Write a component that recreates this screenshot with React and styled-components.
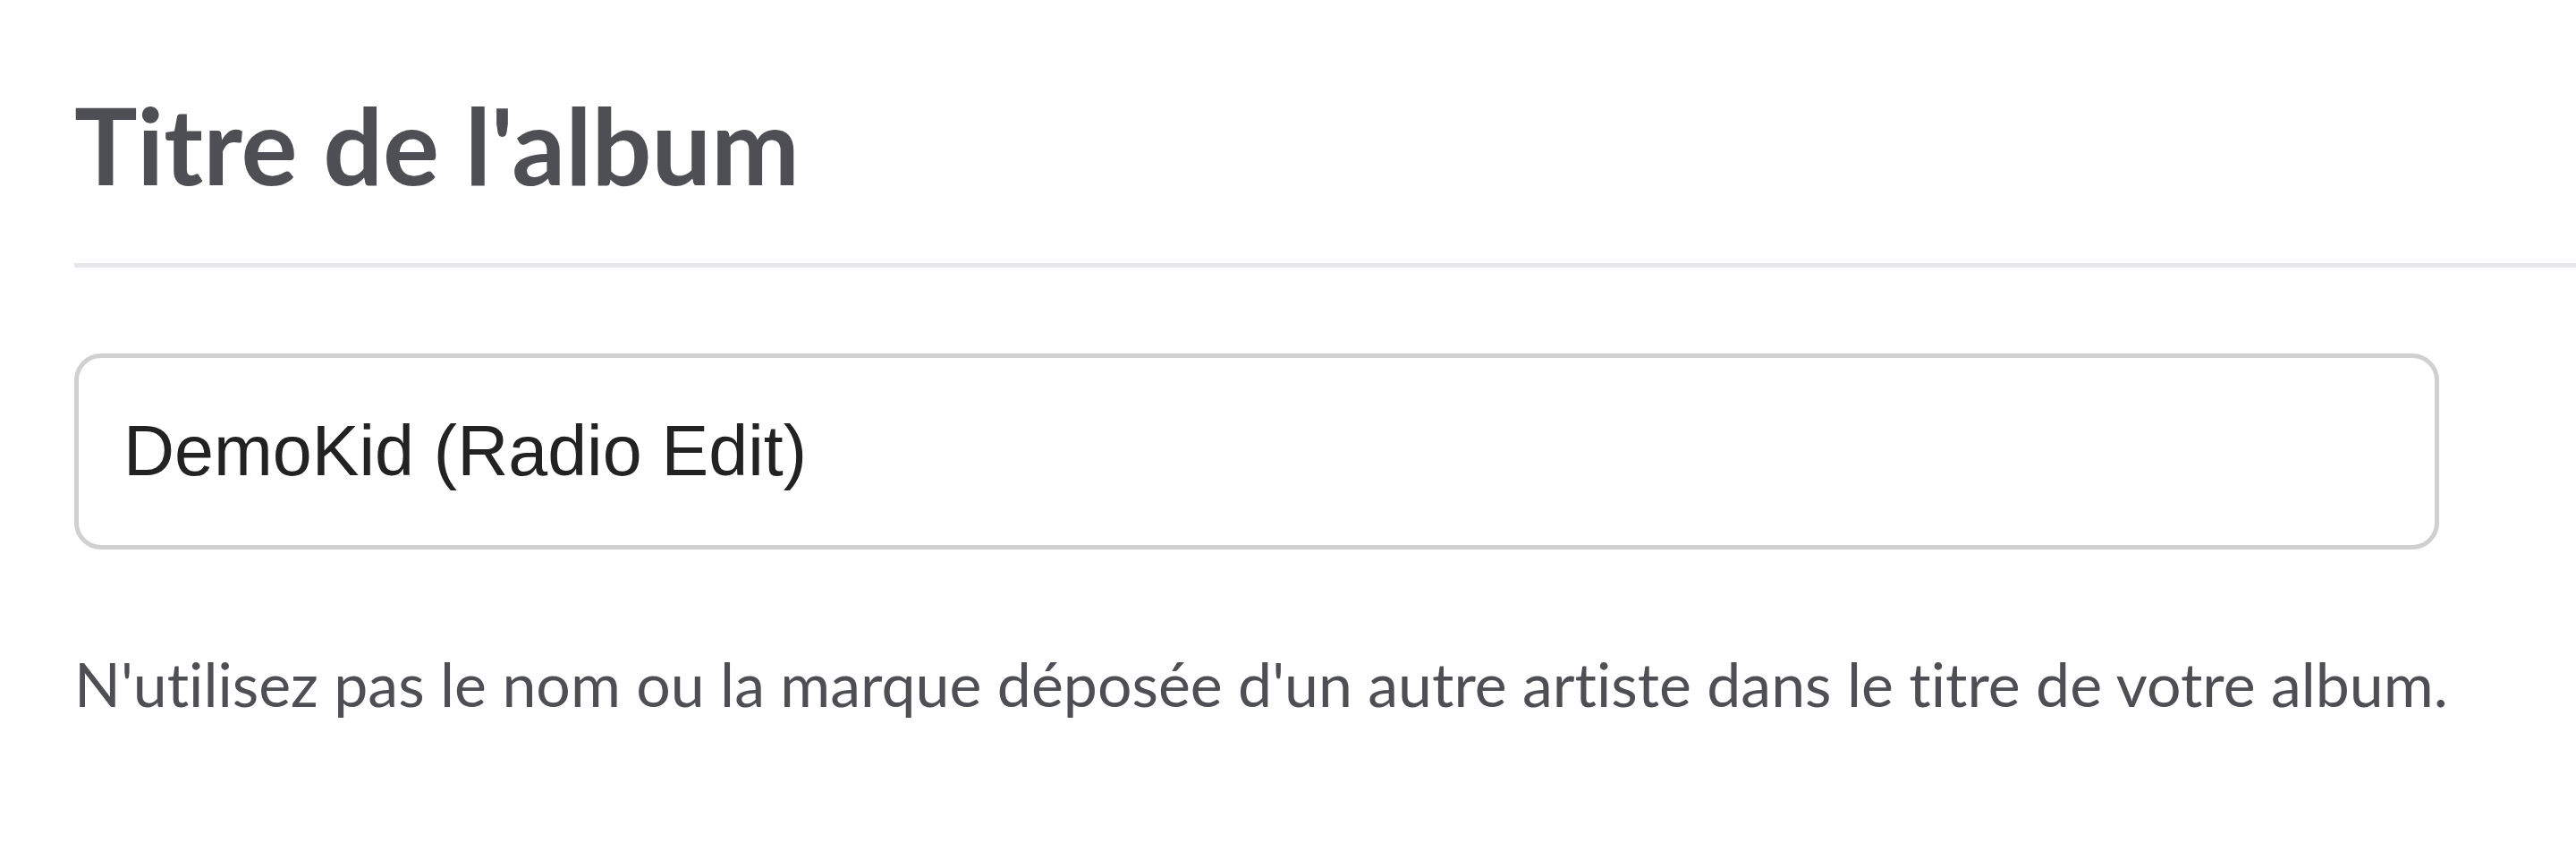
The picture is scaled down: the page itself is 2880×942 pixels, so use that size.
import styled, { createGlobalStyle } from 'styled-components';

const GlobalStyle = createGlobalStyle`
  html, body {
    margin: 0;
    padding: 0;
    background: #ffffff;
  }
`;

const Page = styled.div`
  padding: 91px 0 0 83px;
  font-family: Lato, "Noto Sans", sans-serif;
  font-variant-ligatures: none;
`;

const Heading = styled.h1`
  margin: 0;
  font-size: 118px;
  line-height: 1.2;
  font-weight: 700;
  color: #4e4f55;
`;

const Divider = styled.hr`
  margin: 61px 0 0;
  border: none;
  height: 5px;
  background-color: #e6e6eb;
`;

const FieldBox = styled.div`
  margin-top: 96px;
  width: 2644px;
  height: 219px;
  box-sizing: border-box;
  border: 5px solid #d0d0d0;
  border-radius: 30px;
  display: flex;
  align-items: center;
  padding: 0 50px;
`;

const TextInput = styled.input`
  border: none;
  outline: none;
  width: 100%;
  padding: 0;
  background: transparent;
  font-family: "Liberation Sans", Arial, sans-serif;
  font-size: 79px;
  color: #222222;
`;

const HelpText = styled.p`
  margin: 109px 0 0;
  font-size: 68px;
  line-height: 1.2;
  color: #4e4f55;
`;

const App = () => {
  return (
    <Page>
      <GlobalStyle />
      <Heading>Titre de l'album</Heading>
      <Divider />
      <FieldBox>
        <TextInput defaultValue="DemoKid (Radio Edit)" />
      </FieldBox>
      <HelpText>
        N'utilisez pas le nom ou la marque déposée d'un autre artiste dans le titre de votre album.
      </HelpText>
    </Page>
  );
};

export default App;
